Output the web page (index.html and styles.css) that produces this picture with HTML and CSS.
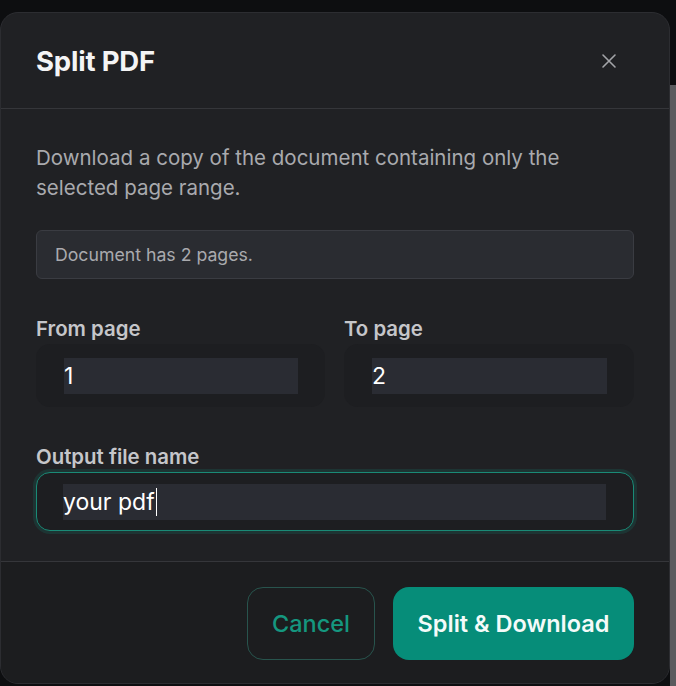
FILE: index.html
```html
<!DOCTYPE html>
<html>
<head>
<meta charset="utf-8">
<link rel="stylesheet" href="styles.css">
</head>
<body>
<div class="scrollbar"></div>
<div class="modal">
  <header class="modal-header">
    <h1 class="title">Split PDF</h1>
    <button class="close" aria-label="Close">
      <svg width="16" height="16" viewBox="0 0 16 16"><path d="M2 2L14 14M14 2L2 14" stroke="#a3a4a8" stroke-width="1.6" stroke-linecap="round"/></svg>
    </button>
  </header>
  <section class="modal-body">
    <p class="desc">Download a copy of the document containing only the selected page range.</p>
    <div class="notice">Document has 2 pages.</div>
    <div class="range">
      <div class="field">
        <label class="label">From page</label>
        <div class="input-wrap"><div class="input">1</div></div>
      </div>
      <div class="field">
        <label class="label">To page</label>
        <div class="input-wrap"><div class="input">2</div></div>
      </div>
    </div>
    <div class="field">
      <label class="label">Output file name</label>
      <div class="input-wrap focused"><div class="input">your pdf<span class="caret"></span></div></div>
    </div>
  </section>
  <footer class="modal-footer">
    <button class="btn btn-cancel">Cancel</button>
    <button class="btn btn-primary">Split &amp; Download</button>
  </footer>
</div>
</body>
</html>
```
FILE: styles.css
```css
html, body {
  margin: 0;
  padding: 0;
}
body {
  background: #0d0e10;
  width: 676px;
  height: 686px;
  overflow: hidden;
  position: relative;
  padding-top: 12px;
  box-sizing: border-box;
  font-family: Inter, "Noto Sans", sans-serif;
}
.scrollbar {
  position: absolute;
  right: 0;
  top: 85px;
  width: 6px;
  bottom: 0;
  background: #5a5b5e;
}
.modal {
  position: relative;
  width: 670px;
  height: 672px;
  background: #202124;
  border: 1px solid #2c2d31;
  border-radius: 18px;
  box-sizing: border-box;
  display: flex;
  flex-direction: column;
  overflow: hidden;
}
.modal-header {
  height: 96px;
  flex: none;
  display: flex;
  align-items: center;
  justify-content: space-between;
  padding: 0 52px 0 35px;
  border-bottom: 1px solid #35363a;
  box-sizing: border-box;
}
.title {
  margin: 0;
  font-weight: 700;
  font-size: 27.5px;
  color: #f4f4f5;
  letter-spacing: -0.2px;
}
.close {
  background: none;
  border: 0;
  padding: 0;
  width: 16px;
  height: 16px;
  display: flex;
}
.modal-body {
  flex: 1;
  padding: 34px 35px 0 35px;
  box-sizing: border-box;
}
.desc {
  margin: 0;
  font-size: 20.5px;
  line-height: 30px;
  color: #a9aaae;
}
.notice {
  margin-top: 27px;
  height: 49px;
  box-sizing: border-box;
  background: #2a2c31;
  border: 1px solid #3a3c42;
  border-radius: 6px;
  padding: 0 18px;
  display: flex;
  align-items: center;
  font-size: 17.7px;
  color: #a9aaae;
}
.range {
  margin-top: 38px;
  display: grid;
  grid-template-columns: 289px 290px;
  column-gap: 19px;
}
.field {
  display: flex;
  flex-direction: column;
}
.modal-body > .field {
  margin-top: 38px;
}
.label {
  font-size: 20.4px;
  font-weight: 600;
  color: #c5c6ca;
  line-height: 24px;
  margin-bottom: 3px;
}
.input-wrap {
  background: #1d1e21;
  border-radius: 14px;
  padding: 13px 26px 12px 27px;
  border: 1px solid transparent;
  box-sizing: border-box;
}
.input-wrap.focused {
  border-color: #1a8a76;
  box-shadow: 0 0 0 3px rgba(20, 110, 95, 0.25);
  padding: 11px 27px 10px 26px;
}
.input {
  height: 36px;
  background: #2a2c33;
  display: flex;
  align-items: center;
  font-size: 23px;
  color: #ffffff;
}
.caret {
  display: inline-block;
  width: 1.5px;
  height: 28px;
  background: #ffffff;
  margin-left: 1px;
}
.modal-footer {
  height: 122px;
  flex: none;
  background: #1c1d1f;
  border-top: 1px solid #35363a;
  box-sizing: border-box;
  display: flex;
  align-items: center;
  justify-content: flex-end;
  gap: 18px;
  padding: 2px 35px 0 0;
}
.btn {
  font-family: Inter, "Liberation Sans", sans-serif;
  font-size: 23.5px;
  height: 73px;
  border-radius: 16px;
  box-sizing: border-box;
  cursor: pointer;
}
.btn-cancel {
  width: 128px;
  background: transparent;
  border: 1px solid #28544d;
  color: #15977f;
  font-weight: 500;
}
.btn-primary {
  width: 241px;
  background: #068d79;
  border: 0;
  color: #f4fbf9;
  font-weight: 600;
}
```
